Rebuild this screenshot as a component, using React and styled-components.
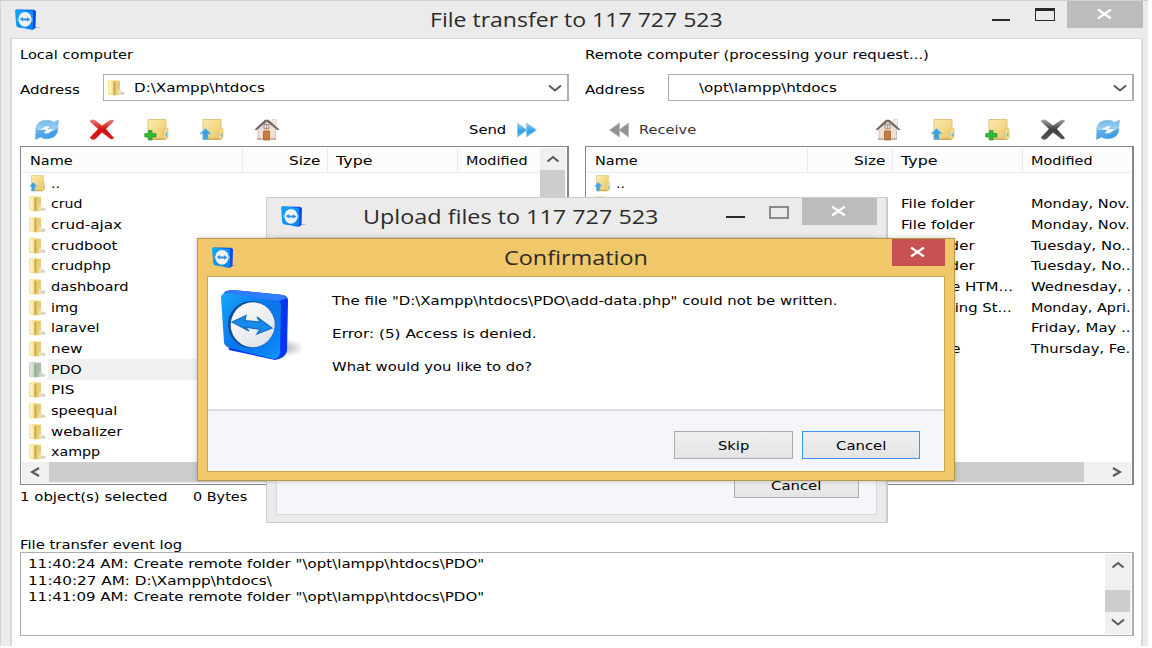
import React, { useLayoutEffect, useRef, useState } from "react";
import styled, { createGlobalStyle } from "styled-components";

const GlobalStyle = createGlobalStyle`
  *, *::before, *::after { box-sizing: border-box; }
  html, body { margin: 0; background: #fff; overflow: hidden; }
  body { font-family: "DejaVu Sans", sans-serif; font-size: 13px; line-height: 16px; color: #000; }
`;

/* ---------- text ---------- */

const TextSlot = styled.span`
  display: block;
  flex: none;
  width: ${(p) => p.$w}px;
  white-space: nowrap;
  overflow: visible;
`;

const TextInk = styled.span`
  display: inline-block;
  transform-origin: 0 50%;
  font-family: ${(p) => (p.$title ? '"Open Sans", sans-serif' : '"DejaVu Sans", sans-serif')};
  font-size: ${(p) => (p.$title ? 19.5 : 12.8)}px;
  line-height: ${(p) => (p.$title ? 26 : 16)}px;
  color: ${(p) => p.$color || "#000"};
`;

function Label({ w, title, color, children }) {
  const ref = useRef(null);
  const [scale, setScale] = useState(1);
  useLayoutEffect(() => {
    setScale((title ? w + 1 : w) / ref.current.offsetWidth);
  }, [w, title]);
  return (
    <TextSlot $w={w}>
      <TextInk ref={ref} $title={title} $color={color} style={{ transform: `scaleX(${scale})` }}>
        {children}
      </TextInk>
    </TextSlot>
  );
}

/* ---------- icons ---------- */

const Svg = styled.svg`
  display: block;
  flex: none;
`;

function Logo() {
  return (
    <Svg width="82" height="71" viewBox="0 0 82 71">
      <defs>
        <linearGradient id="lgFace" x1="0" y1="0" x2="1" y2="1">
          <stop offset="0" stopColor="#19a7fb" />
          <stop offset="0.5" stopColor="#0a74ea" />
          <stop offset="0.8" stopColor="#0a80f2" />
          <stop offset="1" stopColor="#0a9bff" />
        </linearGradient>
        <linearGradient id="lgDisc" x1="0" y1="0" x2="1" y2="1">
          <stop offset="0" stopColor="#ffffff" />
          <stop offset="1" stopColor="#dcdfe4" />
        </linearGradient>
        <radialGradient id="lgShade">
          <stop offset="0" stopColor="#000" stopOpacity="0.32" />
          <stop offset="1" stopColor="#000" stopOpacity="0" />
        </radialGradient>
      </defs>
      <ellipse cx="62" cy="58" rx="21" ry="9" fill="url(#lgShade)" />
      <path d="M3 3 Q5 0 12 0 L62 5 Q67 6 67 11 L66 61 Q65 66 58 69 L54 70 L8 60 L2 7 Z" fill="#0535ef" />
      <path d="M0 8 Q0 2.500 7 3 L55 10 Q60 11 60 16 L59 63 Q58 69 52 69 L9 58 Q3 56 3 52 Z" fill="url(#lgFace)" />
      <path d="M4 2 Q8 0 12 0 L62 5 L66 8 L58 11 L8 3.500 Z" fill="#2f7df8" />
      <ellipse cx="30.500" cy="34.500" rx="23.500" ry="23.500" fill="#0a4d9d" transform="rotate(8 31 34)" />
      <ellipse cx="31.700" cy="34.800" rx="22" ry="22.500" fill="url(#lgDisc)" transform="rotate(8 32 35)" />
      <path
        d="M11 32 L25 25.500 L24 30.500 L39 32 L36 27 L51 38 L36 44 L39 39.500 L24 37 L28 41 Z"
        fill="#188bea"
        stroke="#126fc6"
        strokeWidth="1.200"
      />
    </Svg>
  );
}

const LogoSmall = () => (
  <Svg width="25" height="21" viewBox="0 0 25 21">
    <defs>
      <linearGradient id="lgSmall" x1="0" y1="0" x2="1" y2="1">
        <stop offset="0" stopColor="#10a8fb" />
        <stop offset="1" stopColor="#0a80f5" />
      </linearGradient>
    </defs>
    <path d="M15 18.500 H24.500" stroke="#8a8a8a" strokeOpacity="0.5" />
    <path d="M1 0.500 L19 0.800 L21 2 L20.500 19 L18 20.800 L12 20 Z" fill="#0a49ec" />
    <path d="M0 1.500 Q0 0.500 2 0.500 L18 2 V20.500 L3.500 18.500 Q1.500 18 1.200 16 Z" fill="url(#lgSmall)" />
    <path d="M2 9 H18 V12 H2 Z" fill="#7fc0f5" fillOpacity="0.55" />
    <ellipse cx="10" cy="10.300" rx="6.600" ry="7.400" fill="#eff1f3" />
    <path d="M4.800 10 L8 8 V9.400 H12 V8.200 L15.500 10.600 L12 12.800 V11.500 H8 V12.400 Z" fill="#2a94e8" />
  </Svg>
);

const FolderIcon = ({ dim }) => (
  <Svg width="17" height="16" viewBox="0 0 17 16">
    <path d="M0.300 0.800 L6 0.200 L12 0.800 L12 15 L6 15.500 L0.300 14.300 Z" fill={dim ? "#b9cbb5" : "#eed274"} />
    <path d="M0.300 0.800 L5.500 0.200 L5.500 15 L0.300 14.300 Z" fill={dim ? "#c9d9c6" : "#fae494"} />
    <path d="M1 1.500 L3.500 1.200 L3.500 13.500 L1 13.500 Z" fill={dim ? "#dbe6d6" : "#fff1b8"} />
    <path d="M5.500 2 L7.300 1.600 L7.300 14.800 L5.500 15 Z" fill={dim ? "#8ca58b" : "#c3a455"} />
    <path d="M8 1 L12 1 L12 9 L8 14 Z" fill={dim ? "#a8bca4" : "#e7cd77"} />
    <path d="M10 10 L12.800 9 L12.800 14 L10 14.500 Z" fill={dim ? "#c5d3c1" : "#f3e4a5"} />
    <ellipse cx="14.200" cy="13.300" rx="2.200" ry="1.700" fill="#cfd1d3" />
  </Svg>
);

const BigFolder = () => (
  <>
    <defs>
      <linearGradient id="bigFolder" x1="0" y1="0" x2="1" y2="1">
        <stop offset="0" stopColor="#fcebae" />
        <stop offset="1" stopColor="#eac765" />
      </linearGradient>
    </defs>
    <path d="M4 0.500 H22 V20.500 H4 Z" fill="url(#bigFolder)" stroke="#e2c47c" strokeWidth="1" />
    <path d="M4 19.300 H22 V20.800 H4 Z" fill="#d0aa58" />
    <path d="M21.500 9 Q24 8.500 24 10.500 V18.500 L20.500 20.500 L19.500 19 V12 Z" fill="#f4dc8f" stroke="#d6b566" strokeWidth="0.700" />
    <path d="M22.500 14 V17.500" stroke="#5cc2ea" strokeWidth="1.600" />
  </>
);

const UpFolderIcon = ({ width = 26, height = 22 }) => (
  <Svg width={width} height={height} viewBox="0 0 26 22" preserveAspectRatio="none">
    <BigFolder />
    <path
      d="M6.500 9.500 L12 14.700 H9 V20.500 H4 V14.700 H1 Z"
      fill="#3aa2e2"
      stroke="#7db9dd"
      strokeWidth="0.800"
    />
  </Svg>
);

const NewFolderIcon = () => (
  <Svg width="26" height="22" viewBox="0 0 26 22">
    <BigFolder />
    <path
      d="M4.500 11.500 H8 V14.500 H12 V18 H8 V21 H4.500 V18 H0.800 V14.500 H4.500 Z"
      fill="#2dbd35"
      stroke="#22932a"
      strokeWidth="0.700"
    />
  </Svg>
);

const RefreshIcon = () => (
  <Svg width="26" height="22" viewBox="0 0 26 22">
    <defs>
      <linearGradient id="refTop" x1="0" y1="0" x2="0" y2="1">
        <stop offset="0" stopColor="#6db6ea" />
        <stop offset="1" stopColor="#a3d3f3" />
      </linearGradient>
      <linearGradient id="refBottom" x1="0" y1="0" x2="1" y2="1">
        <stop offset="0" stopColor="#6cb3ee" />
        <stop offset="1" stopColor="#2b93e0" />
      </linearGradient>
    </defs>
    <path
      d="M1.500 10 Q3 1.500 12 1.200 Q17 1 19.500 3.500 L24.500 1 L23.500 10 H13.500 L16.500 7.500 Q13 6 10 8 Q7.500 10 1.500 10.500 Z"
      fill="url(#refTop)"
      stroke="#7dbce6"
      strokeWidth="0.600"
    />
    <path
      d="M24 10 Q23 18.500 15 19.500 Q9.500 20.500 6.500 18 L1.500 20.500 L2 11 H12 L9.500 14 Q13 15.800 16 13.500 Q18.500 11 24 10 Z"
      fill="url(#refBottom)"
      stroke="#5ba8de"
      strokeWidth="0.600"
    />
  </Svg>
);

const CrossIcon = ({ gray }) => (
  <Svg width="26" height="22" viewBox="0 0 26 22">
    <defs>
      <linearGradient id={gray ? "xGray" : "xRed"} x1="0" y1="0" x2="0" y2="1">
        <stop offset="0" stopColor={gray ? "#a5a5a5" : "#f0807c"} />
        <stop offset="0.500" stopColor={gray ? "#404040" : "#cf1111"} />
        <stop offset="1" stopColor={gray ? "#555555" : "#e01c1c"} />
      </linearGradient>
    </defs>
    <path
      d="M0.500 2 Q3 -0.500 6 1 L13 6.500 L21 1 Q24 0 25 2 L17 10 L25 19 Q23.500 21 21.500 20 L13 13.500 L6.500 20 Q3 22 0.800 18.500 L9 10 Z"
      fill={`url(#${gray ? "xGray" : "xRed"})`}
    />
  </Svg>
);

const HomeIcon = () => (
  <Svg width="26" height="22" viewBox="0 0 26 22">
    <path d="M18 0.500 H22.500 V7 H18 Z" fill="#f4eae3" stroke="#d4c3ba" strokeWidth="0.600" />
    <path d="M4 9 L12.500 2 L21.500 9 V20.500 H4 Z" fill="#f0dfd0" stroke="#c4b2a8" strokeWidth="0.700" />
    <path d="M0.500 10.500 L11 0.700 H14.500 L25.500 10.500 L23.500 11.300 L12.800 2.800 L2.500 11.300 Z" fill="#756a6a" />
    <path d="M10 5.500 H15 V9.800 H10 Z" fill="#d8e2ee" stroke="#b08a6c" strokeWidth="1" />
    <path d="M12.500 5.500 V9.800" stroke="#8896b2" strokeWidth="0.800" />
    <path d="M9.500 12 H15.500 V21 H9.500 Z" fill="#c67b40" stroke="#a0622f" strokeWidth="0.800" />
    <path d="M3 19 H8.500 V21 H3 Z M16.500 19 H22 V21 H16.500 Z" fill="#c3b1a5" />
  </Svg>
);

const DoubleArrow = ({ back }) => (
  <Svg width="20" height="16" viewBox="0 0 20 16">
    <defs>
      <linearGradient id="arBlue" x1="0" y1="0" x2="0" y2="1">
        <stop offset="0" stopColor="#8fd0f5" />
        <stop offset="0.600" stopColor="#2f9fe2" />
        <stop offset="1" stopColor="#64b6e8" />
      </linearGradient>
    </defs>
    {back ? (
      <path d="M10.500 1 V15 L0.500 8 Z M19.500 1 V15 L10 8 Z" fill="#939393" stroke="#b5b5b5" strokeWidth="0.700" />
    ) : (
      <path d="M0.500 1 V15 L10 8 Z M9.500 1 V15 L19.500 8 Z" fill="url(#arBlue)" stroke="#8cc8ee" strokeWidth="0.700" />
    )}
  </Svg>
);

const CHEVRONS = {
  down: "M1 1.500 L7 6.500 L13 1.500",
  up: "M1.500 6.500 L7 2 L12.500 6.500",
};

const Chevron = ({ dir }) => (
  <Svg width="14" height="8" viewBox="0 0 14 8">
    <path d={CHEVRONS[dir]} fill="none" stroke="#5a5a5a" strokeWidth="2.100" />
  </Svg>
);

const SideChevron = ({ right }) => (
  <Svg width="10" height="10" viewBox="0 0 10 10">
    <path d={right ? "M1 1 L8 5 L1 9" : "M9 1 L2 5 L9 9"} fill="none" stroke="#5a5a5a" strokeWidth="2.200" />
  </Svg>
);

const CloseGlyph = () => (
  <Svg width="16" height="10" viewBox="0 0 16 10">
    <path d="M1 0.500 L14 9.500 M14 0.500 L1 9.500" stroke="#fff" strokeWidth="2.300" />
  </Svg>
);

/* ---------- window chrome ---------- */

const Desktop = styled.div`
  position: relative;
  width: 1152px;
  height: 648px;
  overflow: hidden;
  background: #fff;
`;

const MainWindow = styled.div`
  display: flex;
  flex-direction: column;
  width: 1148px;
  height: 646px;
  background: #ebebeb;
  border-top: 1px solid #d0d0d0;
  border-left: 1px solid #d4d4d4;
  padding: 0 5px 0 9px;
`;

const TitleBar = styled.div`
  display: flex;
  align-items: flex-start;
  flex: none;
  height: ${(p) => p.$h}px;
`;

const TitleIcon = styled.div`
  flex: none;
  width: ${(p) => p.$w}px;
  padding: ${(p) => p.$pad};
`;

const TitleText = styled.div`
  flex: 1;
  padding-top: ${(p) => p.$top}px;
`;

const MinimizeMark = styled.span`
  flex: none;
  width: ${(p) => p.$w}px;
  height: 2px;
  margin: ${(p) => p.$m};
  background: #2a2a2a;
`;

const MaximizeMark = styled.span`
  flex: none;
  width: ${(p) => p.$w}px;
  height: 13px;
  margin: ${(p) => p.$m};
  border: ${(p) => (p.$dim ? "2px solid #8c8c8c" : "1px solid #2a2a2a")};
  border-top-width: ${(p) => (p.$dim ? 2 : 3)}px;
`;

const CloseButton = styled.span`
  display: flex;
  flex: none;
  align-items: center;
  justify-content: center;
  width: ${(p) => p.$w}px;
  height: 27px;
  padding: 0 1px 1px 0;
  background: ${(p) => (p.$red ? "#c75050" : "#bcbcbc")};
`;

const MainBody = styled.div`
  flex: 1;
  background: #fff;
  border: solid #d9d9d9;
  border-width: 1px 2px 0 2px;
  padding: 0 7px 0 8px;
`;

/* ---------- file panels ---------- */

const Panels = styled.div`
  display: grid;
  grid-template-columns: 549px 549px;
  column-gap: 16px;
`;

const PanelTitle = styled.div`
  height: 35px;
  padding-top: 8px;
`;

const AddressRow = styled.div`
  display: flex;
  height: 27px;
`;

const AddressCaption = styled.div`
  width: 83px;
  padding-top: 8px;
`;

const Combo = styled.div`
  flex: 1;
  display: flex;
  align-items: center;
  border: 1px solid #abadb3;
  border-right-width: 2px;
  padding: 0 5px 0 4px;
`;

const ComboIcon = styled.div`
  flex: none;
  width: 26px;
`;

const Spacer = styled.div`
  flex: 1;
`;

const Toolbar = styled.div`
  display: flex;
  align-items: center;
  height: 45px;
  padding: 18px 0 5px ${(p) => p.$left}px;
`;

const ToolGroup = styled.div`
  display: flex;
  gap: 29px;
  margin-right: ${(p) => p.$right || 0}px;
`;

const TransferButton = styled.div`
  display: flex;
  align-items: center;
  gap: ${(p) => p.$gap}px;
`;

const Table = styled.div`
  display: flex;
  flex-direction: column;
  height: 339px;
  border: 1px solid #828790;
  border-right-width: 2px;
  padding: 0 1px 1px 1px;
`;

const TableTop = styled.div`
  display: flex;
  height: 315px;
`;

const Grid = styled.div`
  flex: 1;
  min-width: 0;
  overflow: hidden;
`;

const columns = "221px 85px 130px 1fr";

const HeadRow = styled.div`
  display: grid;
  grid-template-columns: ${columns};
  height: 26px;
  padding-top: 1px;
  background: #fcfcfc;
  border-bottom: 1px solid #e4edfa;
`;

const HeadCell = styled.div`
  display: flex;
  justify-content: ${(p) => (p.$end ? "flex-end" : "flex-start")};
  padding: 5px 7px 0 8px;
  border-right: ${(p) => (p.$last ? "none" : "1px solid #e0ebfa")};
`;

const FileRow = styled.div`
  display: grid;
  grid-template-columns: ${columns};
  height: 20.67px;
  background: ${(p) => (p.$selected ? "linear-gradient(90deg, #fff 26px, #f0f0f0 26px)" : "transparent")};
`;

const FileName = styled.div`
  display: flex;
  align-items: center;
  padding: 1px 0 0 7px;
  gap: 5px;
`;

const FileCell = styled.div`
  display: flex;
  align-items: center;
  padding: 1px 0 0 8px;
`;

const VScroll = styled.div`
  flex: none;
  display: flex;
  flex-direction: column;
  width: ${(p) => p.$w}px;
  margin-top: 1px;
  background: #f0f0f0;
`;

const VButton = styled.div`
  display: flex;
  align-items: center;
  justify-content: center;
  height: ${(p) => p.$h}px;
  padding: 0 1px 1px 0;
`;

const VThumb = styled.div`
  height: ${(p) => p.$h};
  margin-right: 1px;
  background: #cdcdcd;
`;

const HScroll = styled.div`
  display: flex;
  height: 21px;
  background: #f0f0f0;
`;

const HButton = styled.div`
  display: flex;
  flex: none;
  align-items: center;
  justify-content: center;
  width: 27px;
  height: 20px;
  padding: 0 2px 1px 0;
`;

const HThumb = styled.div`
  flex: none;
  width: ${(p) => p.$w}px;
  height: 20px;
  background: #cdcdcd;
`;

const StatusRow = styled.div`
  display: flex;
  gap: 26px;
  height: 52px;
  padding-top: 4px;
`;

const LogCaption = styled.div`
  height: 0;
`;

const LogBox = styled.div`
  display: flex;
  justify-content: space-between;
  width: 1114px;
  height: 84px;
  margin-top: 15px;
  border: 1px solid #abadb3;
  border-right-width: 2px;
  padding: 0 1px 1px 7px;
`;

const LogLines = styled.div`
  display: flex;
  flex-direction: column;
  gap: 0.7px;
  padding-top: 3px;
`;

/* ---------- dialogs ---------- */

const UploadDialog = styled.div`
  position: absolute;
  left: 266px;
  top: 197px;
  display: flex;
  flex-direction: column;
  width: 622px;
  height: 326px;
  padding: 0 9px 7px 9px;
  background: #ebebeb;
  border: 1px solid #cccccc;
  border-right-width: 2px;
`;

const UploadBody = styled.div`
  flex: 1;
  display: flex;
  align-items: flex-end;
  justify-content: flex-end;
  padding: 0 17px 16px;
  border: 1px solid #d9d9d9;
  background: #f5f6f9;
`;

const ConfirmDialog = styled.div`
  position: absolute;
  left: 197px;
  top: 238px;
  display: flex;
  flex-direction: column;
  width: 758px;
  height: 243px;
  padding: 0 9px 8px 9px;
  background: #f0c869;
  border: 1px solid #b7974c;
  box-shadow: 0 0 5px rgba(0, 0, 0, 0.22);
`;

const ConfirmBody = styled.div`
  flex: 1;
  display: flex;
  flex-direction: column;
  border: 1px solid #c8a550;
  background: #fff;
`;

const Message = styled.div`
  display: flex;
  height: 132px;
  padding: 13px 0 0 13px;
  gap: 29px;
`;

const MessageLines = styled.div`
  display: flex;
  flex-direction: column;
  gap: 17px;
  padding-top: 3px;
`;

const Footer = styled.div`
  flex: 1;
  display: flex;
  justify-content: flex-end;
  gap: 9px;
  padding: 20px 24px 0 0;
  border-top: 2px solid #dedede;
  background: #f5f6f9;
`;

const PushButton = styled.div`
  display: flex;
  align-items: center;
  justify-content: center;
  width: ${(p) => p.$w}px;
  height: ${(p) => p.$h || 28}px;
  padding: 1px 1px 0 0;
  border: 1px solid ${(p) => (p.$focus ? "#3c96f0" : "#acacac")};
  background: linear-gradient(#f0f0f0, #e4e4e4);
`;

/* ---------- data ---------- */

const localFiles = [
  ["crud", 32],
  ["crud-ajax", 71],
  ["crudboot", 66],
  ["crudphp", 60],
  ["dashboard", 78],
  ["img", 27],
  ["laravel", 49],
  ["new", 31],
  ["PDO", 31, true],
  ["PIS", 24],
  ["speequal", 66],
  ["webalizer", 71],
  ["xampp", 49],
];

const remoteFiles = [
  ["File folder", 74, "Monday, Nov.", 99],
  ["File folder", 74, "Monday, Nov.", 99],
  ["File folder", 74, "Tuesday, No..", 100],
  ["File folder", 74, "Tuesday, No..", 100],
  ["Chrome HTM...", 112, "Wednesday, .", 100],
  ["Cascading St...", 111, "Monday, Apri.", 99],
  ["", 0, "Friday, May ..", 100],
  ["PHP File", 60, "Thursday, Fe.", 99],
];

function TableHead() {
  return (
    <HeadRow>
      <HeadCell><Label w={43}>Name</Label></HeadCell>
      <HeadCell $end><Label w={31}>Size</Label></HeadCell>
      <HeadCell><Label w={36}>Type</Label></HeadCell>
      <HeadCell $last><Label w={62}>Modified</Label></HeadCell>
    </HeadRow>
  );
}

function ParentRow() {
  return (
    <FileRow>
      <FileName>
        <UpFolderIcon width={17} height={17} />
        <Label w={9}>..</Label>
      </FileName>
    </FileRow>
  );
}

function LocalPanel() {
  return (
    <div>
      <PanelTitle><Label w={113}>Local computer</Label></PanelTitle>
      <AddressRow>
        <AddressCaption><Label w={60}>Address</Label></AddressCaption>
        <Combo>
          <ComboIcon><FolderIcon /></ComboIcon>
          <Label w={131}>D:\Xampp\htdocs</Label>
          <Spacer />
          <Chevron dir="down" />
        </Combo>
      </AddressRow>
      <Toolbar $left={14}>
        <ToolGroup>
          <RefreshIcon />
          <CrossIcon />
          <NewFolderIcon />
          <UpFolderIcon />
          <HomeIcon />
        </ToolGroup>
        <Spacer />
        <ToolGroup $right={32}>
          <TransferButton $gap={11}>
            <Label w={37}>Send</Label>
            <DoubleArrow />
          </TransferButton>
        </ToolGroup>
      </Toolbar>
      <Table>
        <TableTop>
          <Grid>
            <TableHead />
            <ParentRow />
            {localFiles.map(([name, w, selected]) => (
              <FileRow key={name} $selected={selected}>
                <FileName>
                  <FolderIcon dim={selected} />
                  <Label w={w}>{name}</Label>
                </FileName>
              </FileRow>
            ))}
          </Grid>
          <VScroll $w={26}>
            <VButton $h={22}><Chevron dir="up" /></VButton>
            <VThumb $h="180px" />
          </VScroll>
        </TableTop>
        <HScroll>
          <HButton><SideChevron /></HButton>
          <HThumb $w={400} />
        </HScroll>
      </Table>
    </div>
  );
}

function RemotePanel() {
  return (
    <div>
      <PanelTitle><Label w={344}>Remote computer (processing your request...)</Label></PanelTitle>
      <AddressRow>
        <AddressCaption><Label w={60}>Address</Label></AddressCaption>
        <Combo>
          <ComboIcon />
          <Label w={138}>\opt\lampp\htdocs</Label>
          <Spacer />
          <Chevron dir="down" />
        </Combo>
      </AddressRow>
      <Toolbar $left={24}>
        <TransferButton $gap={10}>
          <DoubleArrow back />
          <Label w={57} color="#333">Receive</Label>
        </TransferButton>
        <Spacer />
        <ToolGroup $right={13}>
          <HomeIcon />
          <UpFolderIcon />
          <NewFolderIcon />
          <CrossIcon gray />
          <RefreshIcon />
        </ToolGroup>
      </Toolbar>
      <Table>
        <TableTop>
          <Grid>
            <TableHead />
            <ParentRow />
            {remoteFiles.map(([type, tw, date, dw], i) => (
              <FileRow key={i}>
                <FileName><FolderIcon /></FileName>
                <FileCell />
                <FileCell><Label w={tw}>{type}</Label></FileCell>
                <FileCell><Label w={dw}>{date}</Label></FileCell>
              </FileRow>
            ))}
          </Grid>
        </TableTop>
        <HScroll>
          <HButton><SideChevron /></HButton>
          <HThumb $w={470} />
          <Spacer />
          <HButton><SideChevron right /></HButton>
        </HScroll>
      </Table>
    </div>
  );
}

export default function App() {
  return (
    <>
      <GlobalStyle />
      <Desktop>
        <MainWindow>
          <TitleBar $h={37}>
            <TitleIcon $w={420} $pad="8px 0 0 5px"><LogoSmall /></TitleIcon>
            <TitleText $top={6}><Label w={292} title color="#2b2b2b">File transfer to 117 727 523</Label></TitleText>
            <MinimizeMark $w={18} $m="18px 25px 0 0" />
            <MaximizeMark $w={20} $m="7px 12px 0 0" />
            <CloseButton $w={76}><CloseGlyph /></CloseButton>
          </TitleBar>
          <MainBody>
            <Panels>
              <LocalPanel />
              <RemotePanel />
            </Panels>
            <StatusRow>
              <Label w={147}>1 object(s) selected</Label>
              <Label w={54}>0 Bytes</Label>
            </StatusRow>
            <LogCaption><Label w={162}>File transfer event log</Label></LogCaption>
            <LogBox>
              <LogLines>
                <Label w={456}>11:40:24 AM: Create remote folder "\opt\lampp\htdocs\PDO"</Label>
                <Label w={244}>11:40:27 AM: D:\Xampp\htdocs\</Label>
                <Label w={456}>11:41:09 AM: Create remote folder "\opt\lampp\htdocs\PDO"</Label>
              </LogLines>
              <VScroll $w={26}>
                <VButton $h={22}><Chevron dir="up" /></VButton>
                <VButton $h={14} />
                <VThumb $h="22px" />
                <VButton $h={21}><Chevron dir="down" /></VButton>
              </VScroll>
            </LogBox>
          </MainBody>
        </MainWindow>

        <UploadDialog>
          <TitleBar $h={39}>
            <TitleIcon $w={87} $pad="8px 0 0 5px"><LogoSmall /></TitleIcon>
            <TitleText $top={6}><Label w={295} title color="#2b2b2b">Upload files to 117 727 523</Label></TitleText>
            <MinimizeMark $w={19} $m="18px 24px 0 0" />
            <MaximizeMark $dim $w={20} $m="8px 13px 0 0" />
            <CloseButton $w={75}><CloseGlyph /></CloseButton>
          </TitleBar>
          <UploadBody>
            <PushButton $w={125} $h={26}><Label w={50}>Cancel</Label></PushButton>
          </UploadBody>
        </UploadDialog>

        <ConfirmDialog>
          <TitleBar $h={37}>
            <TitleIcon $w={297} $pad="8px 0 0 5px"><LogoSmall /></TitleIcon>
            <TitleText $top={6}><Label w={143} title color="#2b2b2b">Confirmation</Label></TitleText>
            <CloseButton $red $w={53}><CloseGlyph /></CloseButton>
          </TitleBar>
          <ConfirmBody>
            <Message>
              <Logo />
              <MessageLines>
                <Label w={506}>The file "D:\Xampp\htdocs\PDO\add-data.php" could not be written.</Label>
                <Label w={204}>Error: (5) Access is denied.</Label>
                <Label w={200}>What would you like to do?</Label>
              </MessageLines>
            </Message>
            <Footer>
              <PushButton $w={119}><Label w={31}>Skip</Label></PushButton>
              <PushButton $w={118} $focus><Label w={50}>Cancel</Label></PushButton>
            </Footer>
          </ConfirmBody>
        </ConfirmDialog>
      </Desktop>
    </>
  );
}
